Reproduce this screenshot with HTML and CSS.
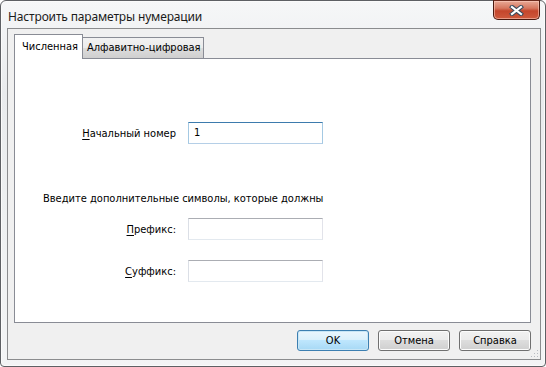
FILE: index.html
```html
<!DOCTYPE html>
<html lang="ru">
<head>
<meta charset="utf-8">
<title>Настроить параметры нумерации</title>
<link rel="stylesheet" href="styles.css">
</head>
<body>
<div class="window">
  <div class="titlebar">
    <span class="title">Настроить параметры нумерации</span>
    <div class="close">
      <svg width="17" height="11" viewBox="0 0 17 11">
        <path d="M4 2 L13 9 M13 2 L4 9" stroke="#3a4a5c" stroke-width="4.2" stroke-linecap="square"/>
        <path d="M4 2 L13 9 M13 2 L4 9" stroke="#ffffff" stroke-width="2.2" stroke-linecap="square"/>
      </svg>
    </div>
  </div>
  <div class="client">
    <div class="tabs">
      <div class="tab active">Численная</div>
      <div class="tab">Алфавитно-цифровая</div>
    </div>
    <div class="panel">
      <div class="field first">
        <label class="lbl"><u>Н</u>ачальный номер</label>
        <div class="input focused">1</div>
      </div>
      <div class="desc">Введите дополнительные символы, которые должны</div>
      <div class="field">
        <label class="lbl"><u>П</u>рефикс:</label>
        <div class="input"></div>
      </div>
      <div class="field second">
        <label class="lbl"><u>С</u>уффикс:</label>
        <div class="input"></div>
      </div>
    </div>
    <div class="buttons">
      <div class="btn default">OK</div>
      <div class="btn">Отмена</div>
      <div class="btn">Справка</div>
    </div>
    <svg class="grip" width="8" height="8" viewBox="0 0 8 8">
      <g fill="#b8bcc2">
        <rect x="6" y="0" width="1" height="1"/>
        <rect x="3" y="3" width="1" height="1"/><rect x="6" y="3" width="1" height="1"/>
        <rect x="0" y="6" width="1" height="1"/><rect x="3" y="6" width="1" height="1"/><rect x="6" y="6" width="1" height="1"/>
      </g>
    </svg>
  </div>
</div>
</body>
</html>
```

FILE: styles.css
```css
html, body {
  margin: 0;
  padding: 0;
  background: #ffffff;
}
body {
  width: 546px;
  height: 367px;
  overflow: hidden;
  font-family: "DejaVu Sans Condensed", "DejaVu Sans", sans-serif;
  font-size: 11px;
  color: #000;
}
.window {
  box-sizing: border-box;
  width: 546px;
  height: 367px;
  border: 1px solid #5e6064;
  border-radius: 6px 6px 4px 4px;
  background: linear-gradient(180deg, #f6f7f8 0%, #e9ebed 25%, #eef0f1 60%, #f3f4f5 100%);
  display: flex;
  flex-direction: column;
  box-shadow: inset 0 0 0 1px #fbfbfb;
}
.titlebar {
  height: 27px;
  flex: none;
  display: flex;
  align-items: flex-start;
  justify-content: space-between;
  padding: 0 5px 0 7px;
}
.title {
  margin-top: 7px;
  font-family: "Noto Sans", sans-serif;
  font-size: 12px;
  line-height: 17px;
  letter-spacing: -0.15px;
  color: #1b1b1b;
}
.close {
  box-sizing: border-box;
  width: 47px;
  height: 20px;
  margin-top: -1px;
  border: 1px solid #4a1a10;
  border-top-color: #6b2a1d;
  border-radius: 0 0 5px 5px;
  background: linear-gradient(180deg, #e9a996 0%, #d6775f 40%, #c4462c 55%, #cf5a3d 100%);
  box-shadow: inset 0 0 0 1px rgba(255, 210, 195, 0.55);
  display: flex;
  align-items: center;
  justify-content: center;
}
.close svg { display: block; }
.client {
  position: relative;
  box-sizing: border-box;
  height: 332px;
  margin: 0 4px 0 6px;
  border: 1px solid #8b8c8e;
  background: #f0f0f0;
  padding: 5px 9px 0 6px;
}
.tabs {
  position: relative;
  z-index: 1;
  display: flex;
  align-items: flex-end;
  height: 25px;
  margin-bottom: -1px;
}
.tab {
  box-sizing: border-box;
  height: 22px;
  padding: 0 4px 0 4px;
  border: 1px solid #898c95;
  border-left: 0;
  background: linear-gradient(180deg, #f2f2f2 0%, #ebebeb 50%, #dddddd 51%, #cfcfcf 100%);
  line-height: 20px;
  white-space: nowrap;
}
.tab.active {
  height: 25px;
  width: 69px;
  padding: 0 0 0 7px;
  border-left: 1px solid #898c95;
  border-bottom: 0;
  background: #ffffff;
  line-height: 24px;
}
.tab + .tab {
  width: 121px;
}
.panel {
  box-sizing: border-box;
  height: 265px;
  border: 1px solid #898c95;
  background: #ffffff;
  padding-top: 63px;
}
.field {
  display: flex;
  align-items: center;
  gap: 12px;
}
.lbl {
  width: 161px;
  text-align: right;
  white-space: nowrap;
}
.lbl u { text-decoration-thickness: 1px; text-underline-offset: 2px; }
.input {
  box-sizing: border-box;
  width: 135px;
  height: 22px;
  border: 1px solid;
  border-color: #abadb3 #e2e3ea #e3e9ef #dbdfe6;
  background: #fff;
  padding-left: 5px;
  line-height: 20px;
}
.input.focused {
  border-color: #3d7bad #a4c9e3 #b5cfe7 #a4c9e3;
}
.desc {
  margin: 48px 0 12px 28px;
  line-height: 14px;
  white-space: nowrap;
}
.field.second { margin-top: 20px; }
.buttons {
  display: flex;
  justify-content: flex-end;
  gap: 9px;
  margin-top: 7px;
}
.btn {
  box-sizing: border-box;
  width: 72px;
  height: 21px;
  border: 1px solid #707070;
  border-radius: 3px;
  background: linear-gradient(180deg, #f2f2f2 0%, #ebebeb 49%, #dddddd 50%, #cfcfcf 100%);
  box-shadow: inset 0 0 0 1px #fcfcfc;
  text-align: center;
  line-height: 19px;
}
.btn.default {
  border-color: #3c7fb1;
  background: linear-gradient(180deg, #eaf6fd 0%, #d9f0fc 49%, #bee6fd 50%, #a7d9f5 100%);
  box-shadow: inset 0 0 0 1px #c8e6f6;
}
.grip {
  position: absolute;
  right: 1px;
  bottom: 1px;
}
```
